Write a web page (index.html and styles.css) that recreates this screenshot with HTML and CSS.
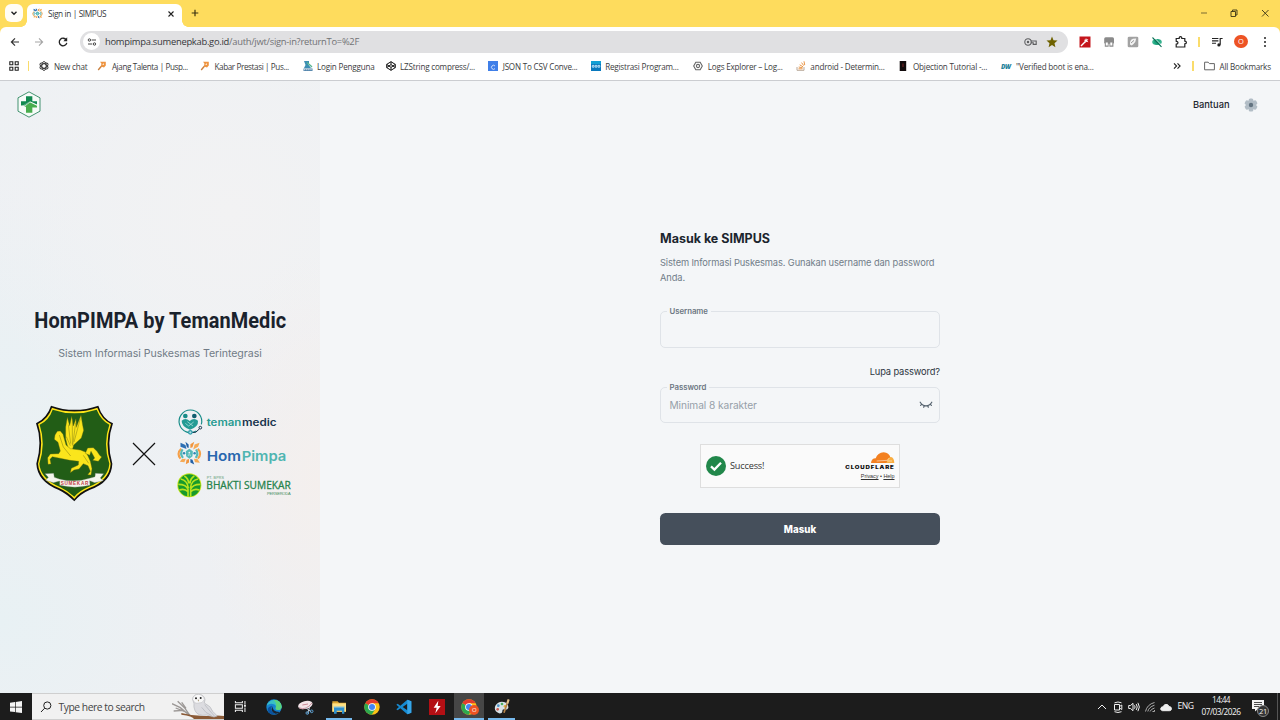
FILE: index.html
```html
<!DOCTYPE html>
<html lang="id">
<head>
<meta charset="utf-8">
<title>Sign in | SIMPUS</title>
<link rel="stylesheet" href="styles.css">
</head>
<body>
<svg class="defs" aria-hidden="true">
  <symbol id="pinwheel" viewBox="0 0 70 70">
    <g fill="none" stroke-width="6">
      <path d="M12 22Q-2 35 10 50" stroke="#f5a04a"/><path d="M16 24Q7 36 17 48" stroke="#55b9b8" stroke-width="6"/>
      <path d="M59 22Q72 36 59 50" stroke="#f5a04a"/><path d="M54 24Q62 36 53 48" stroke="#55b9b8" stroke-width="6"/>
    </g>
    <path d="M10 5L24 11L27 23L10 16Z" fill="#2d6fb4"/><path d="M24 2L33 10V20L28 18Z" fill="#215fa5"/>
    <path d="M38 9L49 2L44 18L38 20Z" fill="#f0953e"/><path d="M50 10L64 5L60 16L46 24Z" fill="#f6aa55"/>
    <path d="M8 59L14 51L25 50L21 60Z" fill="#f6aa55"/><path d="M25 66L27 53L34 51V61Z" fill="#f0953e"/>
    <path d="M38 51L44 53L49 67L38 61Z" fill="#215fa5"/><path d="M48 50L58 51L65 62L51 60Z" fill="#f6aa55"/>
    <path d="M35 22L45 29L44 43L35 50L26 43L25 29Z" fill="#55b9b8"/><circle cx="35" cy="33" r="2.5" fill="#e9f2f3"/><path d="M32 43V39H38V43" stroke="#e9f2f3" stroke-width="1.5" fill="none"/>
    <circle cx="20" cy="35" r="3.5" fill="#2f86b4"/><circle cx="50" cy="35" r="3.5" fill="#2f86b4"/>
  </symbol>
  <symbol id="chrome" viewBox="0 0 48 48">
    <circle cx="24" cy="24" r="23" fill="#fbc116"/>
    <path d="M24 24L4 12.5A23 23 0 0 1 44 12.5H24Z" fill="#e33b2e"/>
    <path d="M24 24L4 12.5A23 23 0 0 0 23 47L34 30Z" fill="#2da94f"/>
    <circle cx="24" cy="24" r="11.5" fill="#fff"/><circle cx="24" cy="24" r="9" fill="#4285f4"/>
  </symbol>
  <symbol id="wrench" viewBox="0 0 10 10">
    <path d="M1.2 9L4.8 4.8" stroke="#c9803f" stroke-width="1.4"/>
    <path d="M3 .8H8.8V4.6L7 6.4L4 5.4L4.4 2.6Z" fill="#ee9440"/><path d="M5.2 3.4L6.8 2.2V4Z" fill="#fff"/>
  </symbol>
</svg>

<div class="screen">
  <header class="tabs">
    <div class="tab-search"><svg viewBox="0 0 8 8"><path d="M1.5 2.7L4 5.2L6.5 2.7" fill="none" stroke="#222" stroke-width="1.4"/></svg></div>
    <div class="tab">
      <svg class="tab-icon" viewBox="0 0 70 70"><use href="#pinwheel"/></svg>
      <span class="tab-title">Sign in | SIMPUS</span>
      <svg class="tab-close" viewBox="0 0 8 8"><path d="M1.5 1.5L6.5 6.5M6.5 1.5L1.5 6.5" stroke="#222" stroke-width="1.1"/></svg>
    </div>
    <svg class="new-tab" viewBox="0 0 8 8"><path d="M4 .7V7.3M.7 4H7.3" stroke="#3a3212" stroke-width="1.2"/></svg>
    <div class="window-buttons">
      <span><svg width="10" height="10"><path d="M2 5H8" stroke="#7a6a32"/></svg></span>
      <span><svg width="10" height="10" fill="none" stroke="#3b3315" stroke-width=".9"><path d="M2 3.5H6.5V8.5H2ZM3.5 3.5V2H8V7H6.5"/></svg></span>
      <span><svg width="10" height="10"><path d="M2 2L8.5 8.5M8.5 2L2 8.5" stroke="#3b3315" stroke-width=".9"/></svg></span>
    </div>
  </header>

  <nav class="toolbar">
    <div class="nav-buttons">
      <span><svg viewBox="0 0 12 12" fill="none" stroke="#333" stroke-width="1.2"><path d="M10 6H2.5M6 2.4L2.4 6L6 9.6"/></svg></span>
      <span><svg viewBox="0 0 12 12" fill="none" stroke="#a5a5a5" stroke-width="1.1"><path d="M2 6H9.5M6 2.4L9.6 6L6 9.6"/></svg></span>
      <span><svg viewBox="0 0 12 12"><path d="M9.3 4A3.8 3.8 0 1 0 9.8 6.8" fill="none" stroke="#222" stroke-width="1.3"/><path d="M10.2 1.3V5.2H6.4Z" fill="#222"/></svg></span>
    </div>
    <div class="omnibox">
      <span class="site-info"><svg viewBox="0 0 10 10" fill="none" stroke="#444" stroke-width="1"><circle cx="2.4" cy="3" r="1.2"/><path d="M4.6 3H9M1 7H5.2"/><circle cx="7.5" cy="7" r="1.2"/></svg></span>
      <span class="url"><b>hompimpa.sumenepkab.go.id</b>/auth/jwt/sign-in?returnTo=%2F</span>
      <svg class="key" viewBox="0 0 13 8" fill="none" stroke="#5d5e60" stroke-width="1.1"><circle cx="4" cy="4" r="3.2"/><path d="M7 3H12.2V6.4H9.2V4.8H7"/><circle cx="4" cy="4" r=".7" fill="#5d5e60"/></svg>
      <svg class="star" viewBox="0 0 12 12"><path d="M6 .6L7.5 4.3L11.5 4.6L8.5 7.2L9.4 11.2L6 9.1L2.6 11.2L3.5 7.2L.5 4.6L4.5 4.3Z" fill="#6f6200"/></svg>
    </div>
    <div class="extensions">
      <span><svg viewBox="0 0 12 12"><path d="M.5.5H11.5V11.5H.5Z" fill="#c4161c"/><path d="M2 10L6.4 5.6" stroke="#fff" stroke-width="1.4"/><path d="M7 1.8L7.5 3.4L9.4 3L8.2 4.6L9.4 6.2L7.5 5.8L6.2 6.8L6.2 5L4.8 3.9L6.6 3.6Z" fill="#fff"/></svg></span>
      <span><svg viewBox="0 0 12 12"><rect x="1.2" y="1.2" width="9.8" height="6.6" rx="1.5" fill="#8a8a8a"/><path d="M1.8 6H5.6V10.8H1.8ZM6.4 6H10.4V10.8H6.4Z" fill="#8a8a8a"/><path d="M2.8 6.6H4.8V9.4H2.8ZM7.3 6.6H9.3V9.4H7.3Z" fill="#fff"/></svg></span>
      <span><svg viewBox="0 0 12 12"><rect x=".7" y=".7" width="10.6" height="10.6" rx="1.4" fill="#a2a2a2"/><path d="M3 8.5Q2.5 4 6 2.7L9.2 2.6Q9 6 6.3 8.2L4.7 9.6" fill="#f3f3f3"/><path d="M4 7L7 4.4" stroke="#999"/></svg></span>
      <span><svg viewBox="0 0 12 12"><ellipse cx="6" cy="6" rx="4.8" ry="3" fill="#35b28e"/><circle cx="6" cy="6" r="2.8" fill="#1aa27b"/><path d="M1.5 1.5L10.5 10.8" stroke="#0a6f55" stroke-width="1.1"/><path d="M3 1.4L11.4 10" stroke="#fff" stroke-width=".7"/></svg></span>
      <span><svg viewBox="0 0 12 12"><path d="M1.2 2.5H4.2Q4.1.7 5.5.7T6.8 2.5H9.8V5.2Q11.4 5.2 11.4 6.5T9.8 7.8V11H1.2V8.2Q3 8 3 6.7T1.2 5.3Z" fill="none" stroke="#222" stroke-width="1.2"/></svg></span>
      <i></i>
      <span><svg viewBox="0 0 12 12"><path d="M1 2.5H7.4M1 4.9H7.4M1 7.3H5" stroke="#222" stroke-width="1.1"/><path d="M11.6 2.5H9.2V8.8" fill="none" stroke="#222" stroke-width="1.2"/><circle cx="7.9" cy="8.9" r="1.6" fill="#222"/></svg></span>
      <span><em>O</em></span>
      <span><svg viewBox="0 0 12 12" fill="#222"><circle cx="6" cy="2" r="1"/><circle cx="6" cy="6" r="1"/><circle cx="6" cy="10" r="1"/></svg></span>
    </div>
  </nav>

  <nav class="bookmarks">
    <svg class="apps" viewBox="0 0 10 10" fill="none" stroke="#222" stroke-width="1.1"><path d="M.8.8H3.8V3.8H.8ZM6.2.8H9.2V3.8H6.2ZM.8 6.2H3.8V9.2H.8ZM6.2 6.2H9.2V9.2H6.2Z"/></svg>
    <i class="bar"></i>
    <a class="w58"><svg viewBox="0 0 10 10" fill="none" stroke="#333" stroke-width=".9"><ellipse cx="5" cy="5" rx="2.2" ry="4.4"/><ellipse cx="5" cy="5" rx="2.2" ry="4.4" transform="rotate(60 5 5)"/><ellipse cx="5" cy="5" rx="2.2" ry="4.4" transform="rotate(120 5 5)"/></svg><span>New chat</span></a>
    <a class="w103 tight"><svg><use href="#wrench"/></svg><span>Ajang Talenta | Pusp...</span></a>
    <a class="w103 tight"><svg><use href="#wrench"/></svg><span>Kabar Prestasi | Pus...</span></a>
    <a class="w83"><svg viewBox="0 0 10 10"><path d="M1 0H6V2L5 3L8 7H1L2.5 4Z" fill="#3d8fb4"/><path d="M4 1.5L7.5 4.5L9 6" stroke="#57b58f" stroke-width="1.3"/><path d="M.5 7.5H9.5V10H.5Z" fill="#497ea8"/><path d="M1 8.7H9" stroke="#fff" stroke-width=".8" stroke-dasharray="1.4 .7"/></svg><span>Login Pengguna</span></a>
    <a class="w103"><svg viewBox="0 0 10 10" fill="none" stroke="#111" stroke-width="1"><path d="M5 .7L9.3 3.4V6.6L5 9.3L.7 6.6V3.4ZM.7 3.4L5 6.4L9.3 3.4M.7 6.6L5 3.6L9.3 6.6M5 .7V3.6M5 6.4V9.3"/></svg><span>LZString compress/...</span></a>
    <a class="w102"><svg viewBox="0 0 10 10"><path d="M0 0H10V10H0Z" fill="#3f7fe8"/><path d="M7 5A2 2 0 1 0 7 7.6" fill="none" stroke="#dce8ff" stroke-width=".9"/></svg><span>JSON To CSV Conve...</span></a>
    <a class="w103"><svg viewBox="0 0 10 10"><path d="M0 0H10V10H0Z" fill="#0878bd"/><path d="M0 0H10V3H0Z" fill="#109fd4"/><path d="M1.3 4.4H3V6.2H1.3ZM4.2 4.4H5.9V6.2H4.2ZM7 4.4H8.8V6.2H7Z" fill="none" stroke="#d7f2ff" stroke-width=".8"/></svg><span>Registrasi Program...</span></a>
    <a class="w103"><svg viewBox="0 0 10 10" fill="none" stroke="#666" stroke-width="1.1"><path d="M2.8 1.2H7.2L9.3 5L7.2 8.8H2.8L.7 5Z"/><circle cx="5" cy="5" r="1.6"/></svg><span>Logs Explorer – Log...</span></a>
    <a class="w103"><svg viewBox="0 0 10 10" fill="none"><path d="M1 6V9.3H8V6" stroke="#b9a99a"/><path d="M2.5 7.8H6.5M2.7 6L6.6 6.8M3.7 3.8L7 5.8M5.5 1.6L7.8 4.7M8 .3L8.7 4" stroke="#ea9647" stroke-width="1"/></svg><span>android - Determin...</span></a>
    <a class="w103"><svg viewBox="0 0 10 10"><path d="M1.7 0H8.2V10H1.7Z" fill="#120b0c"/><path d="M4 3L5 2L6 3V6H4Z" fill="#47191a"/></svg><span>Objection Tutorial -...</span></a>
    <a class="last"><b>DW</b><span>"Verified boot is ena...</span></a>
    <svg class="more" viewBox="0 0 8 8" fill="none" stroke="#222" stroke-width="1.1"><path d="M1 1.3L3.6 4L1 6.7M4.5 1.3L7.1 4L4.5 6.7"/></svg>
    <i class="bar"></i>
    <a class="all"><svg viewBox="0 0 11 10" fill="none" stroke="#666"><path d="M.6 1.2H4.2L5.4 2.6H10.4V8.8H.6Z"/></svg><span>All Bookmarks</span></a>
  </nav>

  <main class="page">
    <section class="brand">
      <svg class="hex" viewBox="0 0 72 80"><path d="M36 2L69 20V60L36 78L3 60V20Z" fill="#f6fbf8" stroke="#27835a" stroke-width="2.6"/><path d="M27 15H46V30H60V40L40 31L24 43H12V30H27Z" fill="#128a50"/><path d="M60 49V44L39 33L22 47H27V65H46V49Z" fill="#48ad4d"/><path d="M14 46L38 32L60 42" fill="none" stroke="#fff" stroke-width="1"/></svg>
      <h1>HomPIMPA by TemanMedic</h1>
      <p class="tagline">Sistem Informasi Puskesmas Terintegrasi</p>
      <div class="partners">
        <svg class="shield" viewBox="45 26 237 297">
          <path d="M93 31Q163 56 235 31Q247 70 279 84Q258 142 277 205Q275 260 210 283Q180 296 163 318Q140 295 115 283Q52 258 49 205Q68 140 48 84Q81 68 93 31Z" fill="#111"/>
          <path d="M96 37Q163 60 232 37Q245 72 273 86Q253 144 272 205Q269 255 207 279Q180 290 163 311Q143 290 118 279Q58 254 54 205Q73 142 54 86Q85 70 96 37Z" fill="#ffe619"/>
          <path d="M98 43Q163 65 230 43Q243 75 268 88Q248 146 268 205Q264 252 205 275Q178 286 163 304Q145 287 120 275Q62 250 58 205Q78 144 59 88Q87 75 98 43Z" fill="#225d16"/>
          <g fill="#fae51c" stroke="#63650d" stroke-width="1.1" stroke-linejoin="round">
            <path d="M145 162L137 130L137 95L142 66L149 91L155 63L160 92L168 70L169 96L183 60L188 90L191 105L184 128L161 149L157 164Z"/>
            <path d="M105 119L112 108L121 107L129 117L138 149L151 160L181 164L198 171L205 184L211 198L216 220L213 239L203 238L211 228L204 211L190 205L177 221L162 224L151 232L154 219L175 209L176 198L150 195L135 192L112 187L97 184L90 192L93 206L84 207L83 187L91 176L116 175L121 167L114 141L103 132Z"/>
            <path d="M196 174L203 158L220 157L231 168L239 180L245 185L235 198L218 195L224 188L213 168L209 180Z"/>
          </g>
          <path d="M145 88L152 145M157 78L157 148M167 82L158 151M181 70L162 140M139 124L151 151M118 119L130 155L152 182M190 180L206 204" fill="none" stroke="#807c12" stroke-width="1.5"/>
          <path d="M75 235L101 234L103 246L118 251Q163 263 208 249L225 244L226 234L251 235L241 248L250 256L224 262L209 256L210 270Q165 281 119 270V257L100 262L77 255L85 246Z" fill="#f3f5ec" stroke="#687568" stroke-width="1"/>
          <text x="122" y="270" font-family="Liberation Sans" font-size="14" font-weight="700" fill="#c3404a" textLength="83">SUMEKAR</text>
        </svg>
        <svg class="cross" viewBox="0 0 24 24"><path d="M1 1L23 23M23 1L1 23" stroke="#111" stroke-width="1.2"/></svg>
        <div class="logos">
          <svg class="logo-teman" viewBox="36 38 300 84">
            <path d="M94 107A34 34 0 1 1 109 87" fill="none" stroke="#178c88" stroke-width="3.5"/><circle cx="61" cy="62" r="7" fill="#178c88"/><circle cx="88" cy="62" r="7" fill="#115f70"/>
            <path d="M50 76Q61 66 74 77Q87 66 99 76Q101 94 75 103Q49 93 50 76Z" fill="#239b94"/><path d="M61 84L71 92L86 80M67 79L84 92" fill="none" stroke="#bfe7e4" stroke-width="2"/>
            <path d="M80 111H92L104 100" fill="none" stroke="#14324a" stroke-width="3"/><circle cx="106" cy="97" r="4" fill="#eaf0f3" stroke="#14324a" stroke-width="3"/><circle cx="76" cy="111" r="7" fill="#2c9caa"/><path d="M76 107V115M72 111H80" stroke="#fff" stroke-width="1.5"/>
            <text x="125" y="93" font-family="Inter" font-weight="600" font-size="30" fill="#289b91" textLength="104" lengthAdjust="spacingAndGlyphs">teman</text><text x="231" y="93" font-family="Inter" font-weight="600" font-size="30" fill="#19354d" textLength="104" lengthAdjust="spacingAndGlyphs">medic</text>
          </svg>
          <svg class="logo-hom" viewBox="36 134 330 80">
            <use href="#pinwheel" x="36" y="136" width="74" height="76"/>
            <text x="125" y="198" font-family="Inter" font-weight="600" font-size="41" fill="#2867ae" textLength="103" lengthAdjust="spacingAndGlyphs">Hom</text><text x="230" y="198" font-family="Inter" font-weight="600" font-size="41" fill="#4fb5b1" textLength="134" lengthAdjust="spacingAndGlyphs">Pimpa</text>
          </svg>
          <svg class="logo-bhakti" viewBox="36 234 345 75">
            <circle cx="73" cy="271" r="36" fill="#c8e61c"/><circle cx="73" cy="271" r="33.5" fill="#169a2c"/>
            <g fill="none" stroke="#b9e31e" stroke-width="5"><path d="M69 305V283Q64 268 40 268M77 305V283Q82 268 106 268M69 290Q58 279 43 285M77 290Q88 279 103 285M70 280Q68 256 47 252M76 280Q78 256 99 252M71 265Q70 250 58 243M75 265Q76 250 88 243"/></g>
            <text x="125" y="253" font-family="Liberation Sans" font-size="11" fill="#5c9a73" textLength="52">PT. BPRS</text>
            <text x="124" y="283" font-family="Open Sans" font-size="30" font-weight="500" fill="#25834b" stroke="#25834b" stroke-width=".8" textLength="253" lengthAdjust="spacingAndGlyphs">BHAKTI SUMEKAR</text>
            <text x="306" y="300" font-family="Liberation Sans" font-size="12" fill="#438c60" textLength="71">PERSERODA</text>
          </svg>
        </div>
      </div>
    </section>

    <section class="content">
      <div class="page-links">
        <span>Bantuan</span>
        <svg viewBox="0 0 14 14"><g fill="#b2bdc6"><circle cx="7" cy="7" r="5"/><rect x="4.7" y=".4" width="4.6" height="13.2" rx="1.5"/><rect x="4.7" y=".4" width="4.6" height="13.2" rx="1.5" transform="rotate(60 7 7)"/><rect x="4.7" y=".4" width="4.6" height="13.2" rx="1.5" transform="rotate(120 7 7)"/></g><circle cx="7" cy="7" r="2.2" fill="#637381"/></svg>
      </div>
      <form class="form">
        <h2>Masuk ke SIMPUS</h2>
        <p class="intro">Sistem Informasi Puskesmas. Gunakan username dan password<br>Anda.</p>
        <div class="field"><label>Username</label></div>
        <a class="forgot">Lupa password?</a>
        <div class="field short"><label>Password</label><span class="placeholder">Minimal 8 karakter</span>
          <svg class="eye" viewBox="0 0 14 8" fill="none" stroke="#56636f" stroke-width="1.2" stroke-linecap="round"><path d="M1.2 1.2Q3.5 4.8 7 4.8T12.8 1.2M2.7 3.3L1.6 4.4M5.2 4.8L4.7 6.3M8.8 4.8L9.3 6.3M11.3 3.3L12.4 4.4"/></svg>
        </div>
        <div class="turnstile">
          <svg class="check" viewBox="0 0 20 20"><circle cx="10" cy="10" r="10" fill="#21874a"/><path d="M5 10.4L8.4 13.6L15 6.8" fill="none" stroke="#fff" stroke-width="2.3"/></svg>
          <span class="success">Success!</span>
          <div class="cf">
            <svg viewBox="0 0 150 54"><path d="M78 33Q79 19 92 19Q98 2 116 1Q132 2 137 18L139 33Z" fill="#f38020"/><path d="M124 33L128 22Q132 15 138 15Q147 17 148 33Z" fill="#faae40"/><path d="M95 27L127 25L133 18M127 27L141 27" fill="none" stroke="#fff" stroke-width="1.5"/><text x="1" y="51" font-family="Inter" font-weight="900" font-size="14" fill="#111" letter-spacing="2" textLength="148" lengthAdjust="spacingAndGlyphs">CLOUDFLARE</text></svg>
            <small><u>Privacy</u> <b>•</b> <u>Help</u></small>
          </div>
        </div>
        <button type="button">Masuk</button>
      </form>
    </section>
  </main>

  <footer class="taskbar">
    <div class="start"><svg viewBox="0 0 12 12" fill="#f4f4f4"><path d="M0 1.7L5 1V5.7H0ZM5.7.9L12 0V5.7H5.7ZM0 6.4H5V11.1L0 10.4ZM5.7 6.4H12V12L5.7 11.2Z"/></svg></div>
    <div class="search">
      <svg class="lens" viewBox="0 0 12 12" fill="none" stroke="#222"><circle cx="7.3" cy="4.5" r="3.6"/><path d="M4.7 7.2L1 11"/></svg>
      <span>Type here to search</span>
      <svg class="owl" viewBox="0 0 156 75">
        <path d="M0 29L25 41L50 62M11 42L37 52M17 22L39 43L54 65M29 25L42 43M5 51L34 49" fill="none" stroke="#9c9896" stroke-width="4"/>
        <path d="M28 57Q70 68 107 66Q137 63 156 66V75H66Q62 66 28 62Z" fill="#8a5a36"/>
        <path d="M62 16Q63 1 80 1Q96 2 99 16L97 27Q118 37 122 52L136 66L126 69L103 63Q78 68 69 50Q64 38 66 29Z" fill="#dcdce0" stroke="#b5b6bb" stroke-width="2"/>
        <path d="M62 16Q64 1 80 1Q96 3 97 17Q91 29 80 27Q68 31 62 16Z" fill="#f8f8f8" stroke="#c2c2c5" stroke-width="2"/><path d="M98 32Q110 47 127 66M89 40Q100 58 119 65" fill="none" stroke="#bfc1c7" stroke-width="3"/>
        <circle cx="72" cy="13" r="3" fill="#222"/><circle cx="86" cy="12" r="3" fill="#222"/><path d="M77 17L81 17L79 23Z" fill="#9c8861"/>
      </svg>
    </div>
    <div class="task first"><svg viewBox="0 0 14 14" fill="none" stroke="#f0f0f0" stroke-width="1.1"><path d="M1.5 1V3H9V1M1.5 13V11H9V13M1.5 5H9V9H1.5ZM11.8 1V5M11.8 8V13"/><path d="M10.8 6.4H12.8" stroke-width="1.8"/></svg></div>
    <div class="task"><svg viewBox="0 0 48 48"><circle cx="24" cy="24" r="23" fill="#1684d0"/><path d="M2 20A23 23 0 0 1 47 23Q47 33 34 33Q27 32 29 28Q32 19 24 16Q12 11 2 20Z" fill="#39bfc7"/><path d="M22 2Q45 2 47 23Q46 33 34 33Q27 32 29 28Q34 12 22 2Z" fill="#5bd47c"/><path d="M18 20Q11 40 32 46Q18 49 9 41Q-2 26 18 20Z" fill="#0b529e"/><path d="M20 21Q17 38 41 39Q37 45 28 44Q12 38 20 21Z" fill="#1a2330"/></svg></div>
    <div class="task"><svg viewBox="0 0 48 48"><ellipse cx="22" cy="18" rx="22" ry="12" fill="#f3e5e8" transform="rotate(-15 22 18)"/><path d="M3 26Q23 36 42 12" fill="none" stroke="#bf8290" stroke-width="2.5"/><path d="M13 18L30 15" stroke="#c98995" stroke-width="3"/><path d="M22 25L40 39M36 21L29 43" stroke="#c3cdd8" stroke-width="3"/><circle cx="28" cy="42" r="4" fill="none" stroke="#5aa0d2" stroke-width="3"/><circle cx="41" cy="37" r="4" fill="none" stroke="#5aa0d2" stroke-width="3"/></svg></div>
    <div class="task open"><svg viewBox="0 0 48 48"><path d="M4 7H20L24 11H45V38H4Z" fill="#dda632"/><path d="M4 13H45V38H4Z" fill="#ffe184"/><path d="M9 25H40V44H33V35H17V44H9Z" fill="#2f91cf"/><path d="M8 24H41" stroke="#7cc0e8" stroke-width="3"/></svg></div>
    <div class="task"><svg><use href="#chrome"/></svg></div>
    <div class="task"><svg viewBox="0 0 48 48"><path d="M34 2L46 7V41L34 46L13 28L5 34L1 31L9 24L1 17L5 14L13 20ZM34 14L20 24L34 34Z" fill="#168bd2" fill-rule="evenodd"/><path d="M34 2L46 7V41L34 46Z" fill="#37a6e8"/></svg></div>
    <div class="task"><svg viewBox="0 0 48 48"><path d="M0 0H48V48H0Z" fill="#b30f14"/><path d="M28 5L14 26H23L19 43L35 21H26Z" fill="#fff"/></svg></div>
    <div class="task open active"><svg><use href="#chrome"/></svg><em>O</em></div>
    <div class="task open"><svg viewBox="0 0 48 48"><path d="M4 20Q14 5 30 9Q44 13 43 27Q39 35 30 31Q24 31 25 38Q24 44 15 43Q-2 37 4 20Z" fill="#d9e3e8"/><circle cx="13" cy="20" r="4" fill="#4890c7"/><circle cx="24" cy="15" r="4" fill="#4eb060"/><circle cx="11" cy="31" r="4" fill="#cc5950"/><circle cx="33" cy="22" r="4" fill="#e1b43e"/><path d="M43 3L30 41" stroke="#b48247" stroke-width="5"/><path d="M44 1L40 14" stroke="#e3c38b" stroke-width="6"/></svg></div>
    <div class="tray">
      <svg viewBox="0 0 12 12"><path d="M2 8L6 4L10 8"/></svg>
      <svg viewBox="0 0 12 12"><path d="M2.5 3.5H7.5V9H2.5ZM7.5 5.5L9.8 4V8.5L7.5 7M2.5 1.8Q6 .2 9.5 1.8M2.5 10.7Q6 12.3 9.5 10.7"/></svg>
      <svg viewBox="0 0 12 12"><path d="M.7 4.5H2.5L5 2.3V9.7L2.5 7.5H.7ZM6.5 4.3Q7.7 6 6.5 7.7M8.2 3Q10.3 6 8.2 9M9.9 1.8Q12.8 6 9.9 10.2"/></svg>
      <svg viewBox="0 0 12 12" class="dim"><path d="M1.5 10.5Q3 3.5 10.5 1.5M3.8 10.5Q4.8 6 10.5 4.2M6 10.5Q7 8 10.5 7M8.5 10.5H10.5V9"/></svg>
      <svg viewBox="0 0 12 12"><path d="M2.5 9.7Q-.2 9 1 6.8Q1.8 5.5 3 6Q4 2.8 7 3.5Q8.6 4 9 5.6Q11.5 5.5 11.5 7.8Q11.3 9.6 9.5 9.7Z" fill="#eee"/></svg>
    </div>
    <span class="lang">ENG</span>
    <div class="clock"><span class="time">14:44</span><span>07/03/2026</span></div>
    <div class="notice"><svg viewBox="0 0 12 12"><path d="M0 0H12V9H6L3 11.5V9H0Z" fill="#f3f3f3"/><path d="M2 2.5H10M2 4.5H10M2 6.5H7" stroke="#222" stroke-width=".8"/></svg><em>21</em></div>
    <i class="peek"></i>
  </footer>
</div>
</body>
</html>
```
FILE: styles.css
```css
* { box-sizing: border-box; }
body { margin: 0; width: 1280px; height: 720px; overflow: hidden; font-family: "Open Sans", "Noto Sans", sans-serif; }
svg { display: block; flex: none; }
em, i { font-style: normal; }
.defs { display: none; }
.screen { display: flex; flex-direction: column; width: 1280px; height: 720px; background: #fedc5d; }

/* Tab strip */
.tabs { display: flex; align-items: center; height: 26.5px; padding-left: 4.5px; flex: none; }
.tab-search { display: flex; align-items: center; justify-content: center; width: 18px; height: 18px; border-radius: 6px; background: #fffdf7; }
.tab-search svg { width: 8px; height: 8px; }
.tab { position: relative; display: flex; align-items: center; align-self: flex-end; width: 155px; height: 22.5px; margin-left: 4px; padding: 0 7px 3px 5px; border-radius: 6px 6px 0 0; background: #fff; }
.tab::before, .tab::after { content: ""; position: absolute; bottom: 0; width: 6px; height: 6px; }
.tab::before { left: -6px; background: radial-gradient(circle at 0 0, transparent 5.5px, #fff 6px); }
.tab::after { right: -6px; background: radial-gradient(circle at 100% 0, transparent 5.5px, #fff 6px); }
.tab-icon { width: 11px; height: 11px; }
.tab-title { flex: 1; margin-left: 5.5px; font-size: 8.3px; letter-spacing: -.38px; color: #36373a; white-space: nowrap; }
.tab-close { width: 8px; height: 8px; }
.new-tab { width: 8px; height: 8px; margin-left: 9px; }
.window-buttons { display: flex; margin-left: auto; }
.window-buttons span { display: flex; justify-content: center; width: 30.6px; }

/* Toolbar */
.toolbar { display: flex; align-items: center; height: 30px; flex: none; border-radius: 6px 6px 0 0; background: #fff; padding-left: 2.5px; }
.nav-buttons { display: flex; width: 77.5px; }
.nav-buttons span { display: flex; justify-content: center; width: 24px; }
.nav-buttons svg { width: 12px; height: 12px; }
.omnibox { display: flex; align-items: center; width: 988px; height: 22px; border-radius: 11px; background: #e0e0e2; }
.site-info { display: flex; align-items: center; justify-content: center; width: 17px; height: 17px; margin-left: 3px; border-radius: 50%; background: #fff; }
.site-info svg { width: 10px; height: 10px; }
.url { flex: 1; margin-left: 5px; font-size: 9.4px; letter-spacing: -.27px; color: #717275; white-space: nowrap; }
.url b { font-weight: 400; color: #36373a; }
.key { width: 13px; height: 8px; margin-right: 1px; }
.star { width: 12px; height: 12px; margin: 0 10px 0 8.5px; }
.extensions { display: flex; align-items: center; margin-left: 5px; }
.extensions span { display: flex; justify-content: center; width: 24px; }
.extensions svg { width: 12px; height: 12px; }
.extensions i { width: 1.2px; height: 10px; margin: 0 5.4px; background: #fadc6b; }
.extensions em { width: 13.5px; height: 13.5px; border-radius: 50%; background: #ed5324; color: #fff; font-size: 7.5px; line-height: 13.5px; text-align: center; }

/* Bookmarks */
.bookmarks { display: flex; align-items: center; height: 24.5px; flex: none; padding-left: 8.5px; padding-bottom: 4.5px; border-bottom: 1px solid #cbcdd1; background: #fff; color: #3b3c40; font-size: 8.1px; letter-spacing: -.2px; white-space: nowrap; }
.bookmarks a { display: flex; align-items: center; flex: none; gap: 4.5px; }
.bookmarks a svg { width: 10px; height: 10px; }
.bookmarks a b { width: 11px; color: #1b829b; font-size: 6.4px; font-style: italic; font-weight: 800; letter-spacing: -.3px; }
.apps { width: 10px; height: 10px; }
.bar { width: 1.2px; height: 10px; background: #fadc6b; }
.apps + .bar { margin: 0 10px 0 9.7px; }
.w58 { width: 58px; }
.w83 { width: 83px; }
.w102 { width: 102.5px; }
.w103 { width: 102.6px; }
.tight { letter-spacing: -.38px; }
.bookmarks .last { flex: 1; gap: 4px; }
.more { width: 8px; height: 8px; margin-right: 11.5px; }
.all { width: 76px; margin-left: 10.5px; }
.bookmarks .all svg { width: 11px; }

/* Page */
.page { display: flex; flex: 1; min-height: 0; background: #f4f6f8; }
.brand { display: flex; flex-direction: column; align-items: center; width: 320px; background: radial-gradient(ellipse 120px 230px at 320px 400px, #f4efed 0%, rgba(244,239,237,0) 100%), radial-gradient(ellipse 260px 240px at 230px 130px, #f2f2f3 0%, rgba(242,242,243,0) 100%), radial-gradient(ellipse 190px 190px at 0 300px, #e9f1f4 0%, rgba(233,241,244,0) 100%), radial-gradient(ellipse 190px 170px at 0 540px, #e8f1f4 0%, rgba(232,241,244,0) 100%), linear-gradient(#eef1f4, #eef0f3); }
.hex { width: 24px; height: 27px; margin: 10px 0 0 17px; align-self: flex-start; }
h1 { margin: 187.5px 0 0; font: 700 22px/30px Roboto, sans-serif; letter-spacing: .1px; transform: scaleX(.905); color: #1a222c; white-space: nowrap; }
.tagline { margin: 9.5px 0 0; font: 400 10.6px/18px Inter, sans-serif; letter-spacing: -.05px; color: #707b86; white-space: nowrap; }
.partners { display: flex; width: 320px; padding-left: 35px; margin-top: 40.5px; }
.shield { width: 79px; height: 99px; }
.cross { width: 24px; height: 24px; margin: 38px 0 0 17.5px; }
.logos { padding: 4.5px 0 0 21.5px; }
.logo-teman { width: 100px; height: 28px; }
.logo-hom { width: 110px; height: 26.7px; margin-top: 4px; }
.logo-bhakti { width: 115px; height: 25px; margin-top: 6.5px; }

.content { display: flex; flex-direction: column; align-items: center; width: 960px; font-family: Inter, sans-serif; }
.page-links { display: flex; align-items: center; align-self: flex-end; gap: 14.5px; height: 20px; margin: 13.5px 22px 0 0; font-size: 9.3px; font-weight: 500; color: #1c252e; }
.page-links svg { width: 14px; height: 14px; }
.form { display: flex; flex-direction: column; width: 280px; margin-top: 114.5px; }
h2 { margin: 0; font-size: 12.5px; line-height: 20px; font-weight: 700; color: #1c252e; white-space: nowrap; }
.intro { margin: 7px 0 26px; font-size: 9.3px; line-height: 14.7px; letter-spacing: -.11px; color: #717d88; white-space: nowrap; }
.field { position: relative; display: flex; align-items: center; height: 37px; padding: 0 6px 0 8.5px; border: 1px solid #dfe3e8; border-radius: 5px; }
.short { height: 36px; }
.field label { position: absolute; top: -6px; left: 5.5px; padding: 0 3px; background: #f4f6f8; font-size: 7.8px; line-height: 10px; font-weight: 600; letter-spacing: -.03px; color: #6c7782; }
.forgot { align-self: flex-end; margin: 16px 0 7.5px; font-size: 9.3px; line-height: 15px; letter-spacing: -.12px; color: #2b343d; }
.placeholder { flex: 1; font-size: 10.2px; letter-spacing: -.08px; color: #969fa8; }
.eye { width: 14px; height: 8px; }
.turnstile { display: flex; align-items: center; align-self: center; width: 200px; height: 44px; margin-top: 21px; padding: 0 4.5px 0 5px; border: 1px solid #dedede; background: #fafafa; }
.check { width: 20px; height: 20px; }
.success { flex: 1; margin-left: 4px; font: 9.2px "Open Sans", sans-serif; letter-spacing: -.2px; color: #333; }
.cf { display: flex; flex-direction: column; align-items: flex-end; width: 50px; }
.cf svg { width: 50px; height: 18px; }
.cf small { margin-top: 3px; font: 5.4px/7px "Liberation Sans", sans-serif; color: #333; white-space: nowrap; }
.form button { height: 32px; margin-top: 25.5px; border: 0; border-radius: 5.5px; background: #454f5b; color: #fff; font: 800 9.7px Inter, sans-serif; }

/* Taskbar */
.taskbar { display: flex; height: 27px; flex: none; align-items: stretch; background: #1c1c1c; color: #f4f4f4; font-size: 8px; }
.start { display: flex; align-items: center; justify-content: center; width: 32px; }
.start svg { width: 12px; height: 12px; }
.search { display: flex; align-items: center; width: 192px; padding-left: 8px; border: solid #cfcfcf; border-width: 1px 0; background: #f1f1f1; color: #444; font-size: 10.3px; }
.search span { flex: 1; margin-left: 6.5px; letter-spacing: -.45px; white-space: nowrap; }
.lens { width: 12px; height: 12px; }
.owl { width: 52px; height: 25px; }
.task { position: relative; display: flex; align-items: center; justify-content: center; width: 32.6px; border-bottom: 2px solid transparent; padding-top: 2px; }
.task svg { width: 16px; height: 16px; }
.task.first { width: 33.5px; }
.first svg { width: 13px; height: 13px; }
.open::after { content: ""; position: absolute; bottom: -2px; left: 3px; right: 3px; height: 2px; background: #76b9ed; }
.task.active { width: 29.7px; margin: 0 1.3px; background: #464646; }
.active::after { left: 0; right: 0; }
.active em { position: absolute; left: 15px; top: 12px; width: 10px; height: 10px; border-radius: 50%; background: #ed5324; font-size: 6px; line-height: 10px; text-align: center; }
.tray { display: flex; align-items: center; gap: 4px; margin-left: auto; }
.tray svg { width: 12px; height: 12px; fill: none; stroke: #eee; stroke-width: 1; }
.tray .dim { stroke: #aaa; }
.lang { align-self: center; width: 16px; margin: 0 0 1px 6px; font-size: 8.6px; letter-spacing: -.5px; }
.clock { display: flex; flex-direction: column; align-items: center; justify-content: center; width: 40px; margin-left: 7.5px; padding-bottom: 2px; font-size: 8.3px; line-height: 12px; letter-spacing: -.52px; white-space: nowrap; }
.time { letter-spacing: -.65px; }
.notice { position: relative; width: 25px; margin-left: 11px; }
.notice svg { width: 12px; height: 12px; margin-top: 7px; }
.notice em { position: absolute; left: 5px; top: 12px; width: 12px; height: 12px; border: 1px solid #888; border-radius: 50%; background: #333; font-size: 7.5px; line-height: 10px; letter-spacing: -.4px; text-align: center; }
.peek { width: 3px; border-left: 1px solid #555; }
```
